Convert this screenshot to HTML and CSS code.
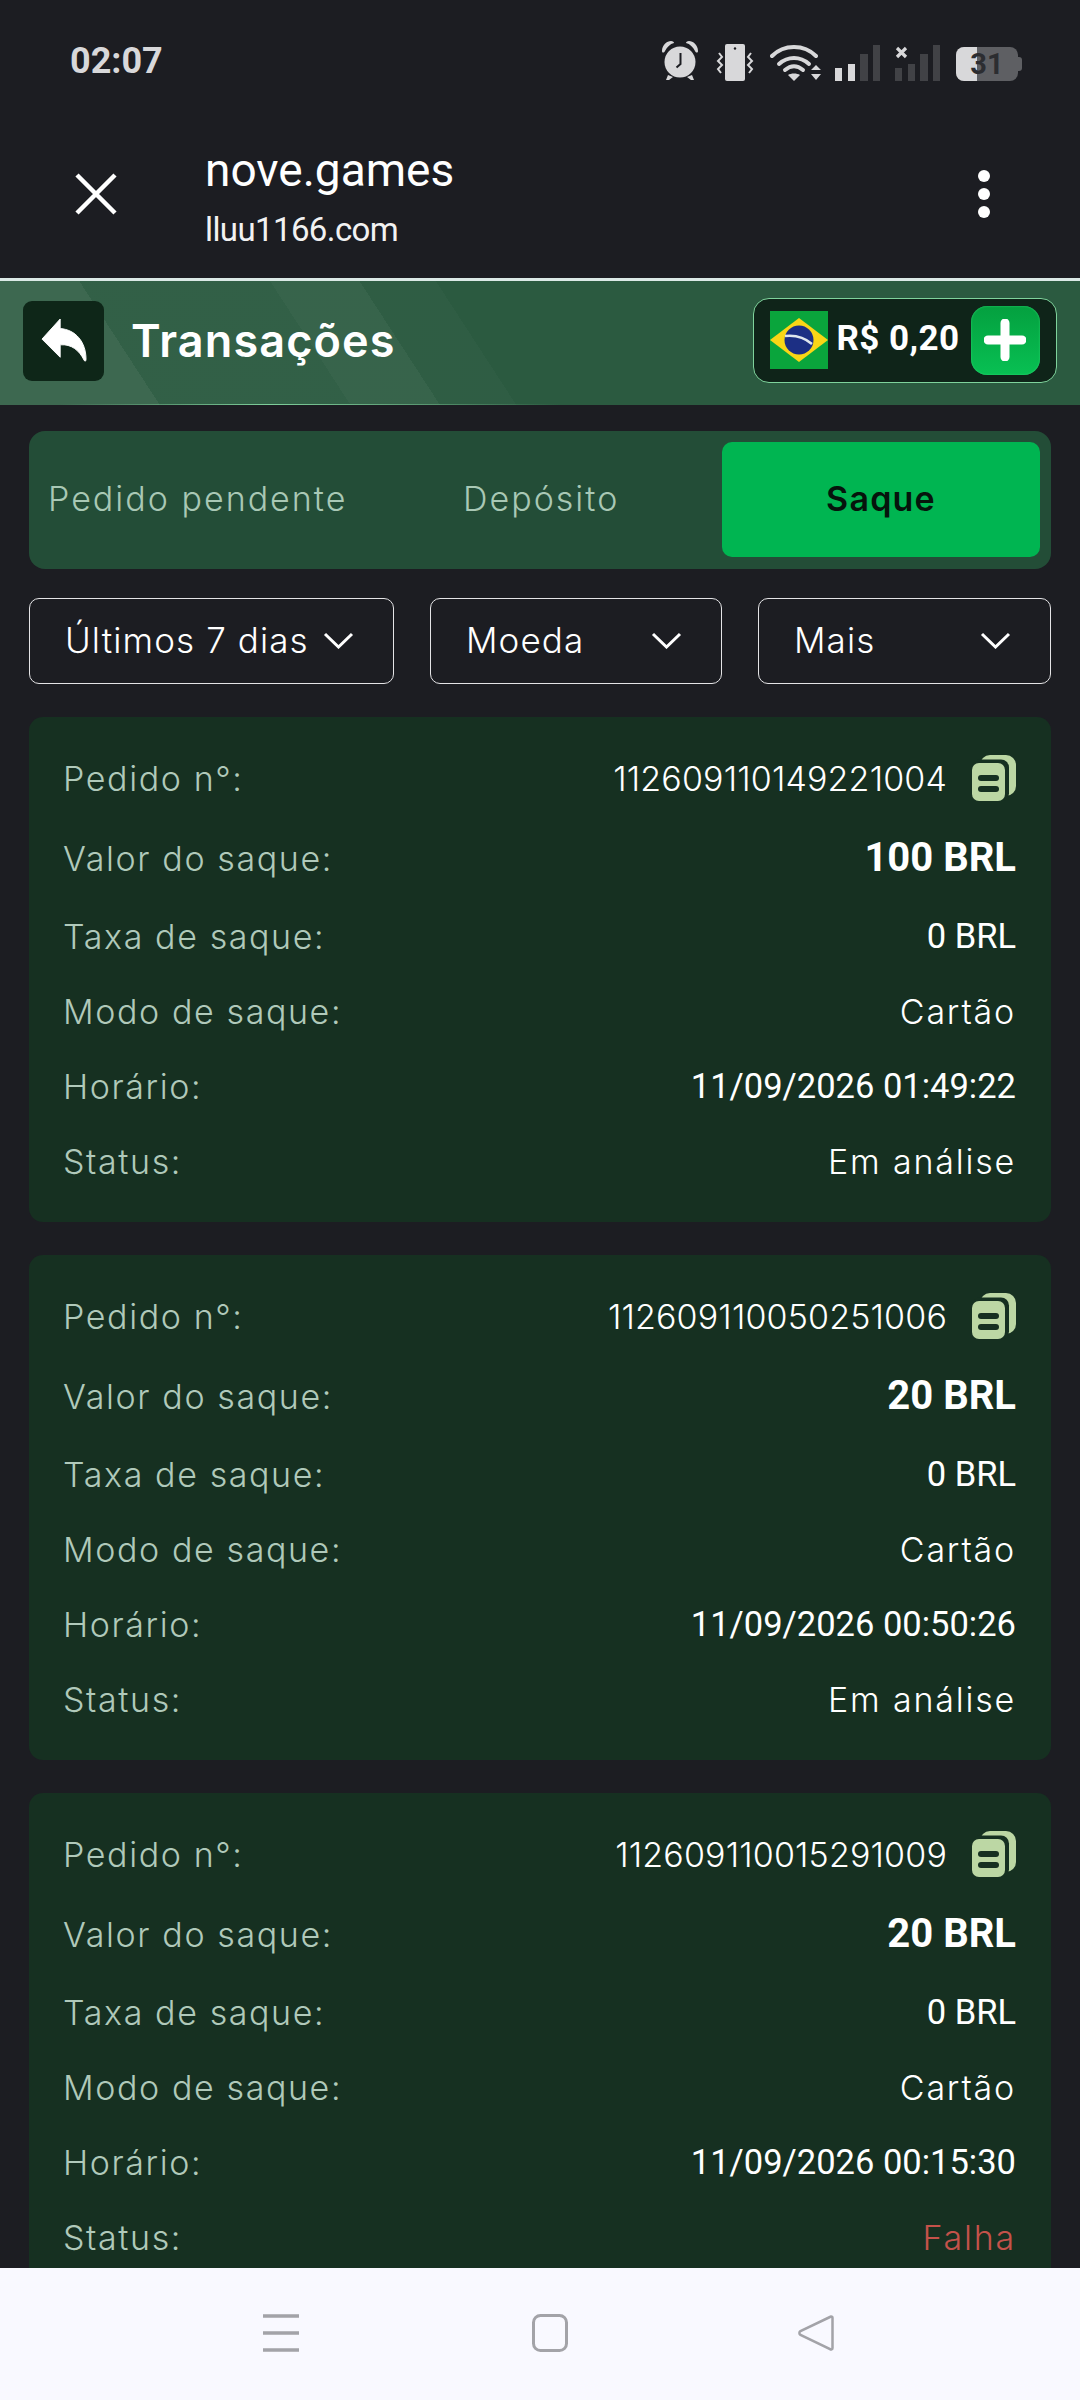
FILE: index.html
```html
<!DOCTYPE html>
<html lang="pt">
<head>
<meta charset="utf-8">
<title>Transações</title>
<link rel="stylesheet" href="styles.css">
</head>
<body>
<div class="screen">
  <div class="chrome">
    <div class="status">
      <span class="clock">02:07</span>
      <div class="status-icons">
        <svg class="i-alarm" viewBox="0 0 38 40"><circle cx="19" cy="21" r="15.500" fill="#d8d8da"/><path d="M1 10C1 4 6 0 10 0c2 0 3 1 3 2-4 1-7 4-9 8-1 2-3 2-3 0zM37 10C37 4 32 0 28 0c-2 0-3 1-3 2 4 1 7 4 9 8 1 2 3 2 3 0z" fill="#d8d8da"/><path d="M7 34l-2 5h3l4-3zM31 34l2 5h-3l-4-3z" fill="#d8d8da"/><path d="M19.500 12v11l-4 3.500" fill="none" stroke="#1c1d22" stroke-width="2"/></svg>
        <svg class="i-vib" viewBox="0 0 38 37"><rect x="9" y="0" width="20" height="37" rx="2" fill="#d8d8da"/><circle cx="19" cy="4.500" r="1.200" fill="#1c1d22"/><path d="M3 9l3 4-4 4 4 4-4 4 3 4M35 9l-3 4 4 4-4 4 4 4-3 4" fill="none" stroke="#d8d8da" stroke-width="2"/></svg>
        <svg class="i-wifi" viewBox="0 0 51 37"><path d="M2 12C14 0 34 0 46 12" fill="none" stroke="#d8d8da" stroke-width="4" stroke-linecap="round"/><path d="M9 20c9-8 21-8 30 0" fill="none" stroke="#d8d8da" stroke-width="4" stroke-linecap="round"/><path d="M15 26c6-5 12-5 18 0" fill="none" stroke="#d8d8da" stroke-width="4" stroke-linecap="round"/><path d="M18 31c3-2 9-2 12 0l-6 6z" fill="#d8d8da"/><path d="M41 26l5-5 5 5zM41 30h10l-5 6z" fill="#d8d8da"/></svg>
        <svg class="i-sig1" viewBox="0 0 45 36"><rect x="0" y="23" width="7" height="13" fill="#d8d8da"/><rect x="13" y="19" width="7" height="17" fill="#d8d8da"/><rect x="25" y="9" width="8" height="27" fill="#414246"/><rect x="38" y="0" width="7" height="36" fill="#414246"/></svg>
        <svg class="i-sig2" viewBox="0 0 45 36"><rect x="0" y="23" width="7" height="13" fill="#414246"/><rect x="13" y="19" width="7" height="17" fill="#414246"/><rect x="25" y="9" width="8" height="27" fill="#414246"/><rect x="38" y="0" width="7" height="36" fill="#414246"/><path d="M2 3l9 9M11 3l-9 9" stroke="#d8d8da" stroke-width="3.200"/></svg>
        <div class="battery"><div class="batt-body"><span class="batt-fill"></span><span class="batt-num">31</span></div><span class="batt-nub"></span></div>
      </div>
    </div>
    <div class="tabbar">
      <svg class="i-close" viewBox="0 0 42 42"><path d="M2 2l38 38M40 2L2 40" stroke="#fff" stroke-width="4.500"/></svg>
      <div class="site">
        <div class="site-title">nove.games</div>
        <div class="site-url">lluu1166.com</div>
      </div>
      <div class="kebab"><i></i><i></i><i></i></div>
    </div>
  </div>
  <div class="rule"></div>
  <header class="head">
    <button class="back">
      <svg viewBox="0 0 46 46"><path d="M19 0L0 21l19 19V27c12-1 20 6 25 16 1 2 2 1 2-1C46 24 35 11 19 10z" fill="#fff" stroke="#fff" stroke-width="1" stroke-linejoin="round"/></svg>
    </button>
    <h1 class="title">Transações</h1>
    <div class="wallet">
      <svg class="flag" viewBox="0 0 58 58"><rect width="58" height="58" fill="#0aa53c"/><path d="M29 7l29 22-29 22L0 29z" fill="#f9d616"/><circle cx="29" cy="29" r="14.500" fill="#1c2f84"/><path d="M15 25c9-1 19 1 27 8" stroke="#dfe6ee" stroke-width="2.500" fill="none"/></svg>
      <span class="amount">R$ 0,20</span>
      <span class="plus"><svg viewBox="0 0 42 42"><path d="M21 4v34M4 21h34" stroke="#fff" stroke-width="9" stroke-linecap="round"/></svg></span>
    </div>
  </header>
  <main class="content">
    <nav class="tabs">
      <span class="tab tab-pend">Pedido pendente</span>
      <span class="tab tab-dep">Depósito</span>
      <span class="tab tab-on">Saque</span>
    </nav>
    <div class="filters">
      <div class="sel sel-a"><span>Últimos 7 dias</span><svg viewBox="0 0 31 17"><path d="M2 2l13.500 13L29 2" fill="none" stroke="#fff" stroke-width="3"/></svg></div>
      <div class="sel sel-b"><span>Moeda</span><svg viewBox="0 0 31 17"><path d="M2 2l13.500 13L29 2" fill="none" stroke="#fff" stroke-width="3"/></svg></div>
      <div class="sel sel-c"><span>Mais</span><svg viewBox="0 0 31 17"><path d="M2 2l13.500 13L29 2" fill="none" stroke="#fff" stroke-width="3"/></svg></div>
    </div>

    <section class="card">
      <div class="row"><span class="k">Pedido n°:</span><span class="v num">112609110149221004<svg class="copy" viewBox="0 0 44 46"><rect x="8" y="0" width="36" height="41" rx="10" fill="#bcd7a4"/><rect x="0" y="4.500" width="37" height="42" rx="8" fill="#163021"/><rect x="0" y="8" width="33" height="38" rx="7" fill="#bcd7a4"/><rect x="6" y="20" width="21" height="6" rx="3" fill="#163021"/><rect x="6" y="31" width="21" height="6" rx="3" fill="#163021"/></svg></span></div>
      <div class="row r2"><span class="k">Valor do saque:</span><span class="v big">100 BRL</span></div>
      <div class="row r3"><span class="k">Taxa de saque:</span><span class="v rb">0 BRL</span></div>
      <div class="row r4"><span class="k">Modo de saque:</span><span class="v">Cartão</span></div>
      <div class="row r5"><span class="k">Horário:</span><span class="v rb">11/09/2026 01:49:22</span></div>
      <div class="row r6"><span class="k">Status:</span><span class="v">Em análise</span></div>
    </section>

    <section class="card">
      <div class="row"><span class="k">Pedido n°:</span><span class="v num">112609110050251006<svg class="copy" viewBox="0 0 44 46"><rect x="8" y="0" width="36" height="41" rx="10" fill="#bcd7a4"/><rect x="0" y="4.500" width="37" height="42" rx="8" fill="#163021"/><rect x="0" y="8" width="33" height="38" rx="7" fill="#bcd7a4"/><rect x="6" y="20" width="21" height="6" rx="3" fill="#163021"/><rect x="6" y="31" width="21" height="6" rx="3" fill="#163021"/></svg></span></div>
      <div class="row r2"><span class="k">Valor do saque:</span><span class="v big">20 BRL</span></div>
      <div class="row r3"><span class="k">Taxa de saque:</span><span class="v rb">0 BRL</span></div>
      <div class="row r4"><span class="k">Modo de saque:</span><span class="v">Cartão</span></div>
      <div class="row r5"><span class="k">Horário:</span><span class="v rb">11/09/2026 00:50:26</span></div>
      <div class="row r6"><span class="k">Status:</span><span class="v">Em análise</span></div>
    </section>

    <section class="card">
      <div class="row"><span class="k">Pedido n°:</span><span class="v num">112609110015291009<svg class="copy" viewBox="0 0 44 46"><rect x="8" y="0" width="36" height="41" rx="10" fill="#bcd7a4"/><rect x="0" y="4.500" width="37" height="42" rx="8" fill="#163021"/><rect x="0" y="8" width="33" height="38" rx="7" fill="#bcd7a4"/><rect x="6" y="20" width="21" height="6" rx="3" fill="#163021"/><rect x="6" y="31" width="21" height="6" rx="3" fill="#163021"/></svg></span></div>
      <div class="row r2"><span class="k">Valor do saque:</span><span class="v big">20 BRL</span></div>
      <div class="row r3"><span class="k">Taxa de saque:</span><span class="v rb">0 BRL</span></div>
      <div class="row r4"><span class="k">Modo de saque:</span><span class="v">Cartão</span></div>
      <div class="row r5"><span class="k">Horário:</span><span class="v rb">11/09/2026 00:15:30</span></div>
      <div class="row r6"><span class="k">Status:</span><span class="v fail">Falha</span></div>
    </section>
  </main>
  <footer class="navbar">
    <svg class="nav-menu" viewBox="0 0 36 38"><path d="M0 2h36M0 19h36M0 36h36" stroke="#a3a3a8" stroke-width="3.500"/></svg>
    <svg class="nav-home" viewBox="0 0 36 38"><rect x="1.500" y="1.500" width="33" height="35" rx="7" fill="none" stroke="#a3a3a8" stroke-width="3"/></svg>
    <svg class="nav-back" viewBox="0 0 36 38"><path d="M33 2.500c1 0 1.500.5 1.500 1.500v30c0 1.500-1.500 2-2.500 1L2.500 21c-1.500-1-1.500-3 0-4L32 3z" fill="none" stroke="#a3a3a8" stroke-width="2.500"/></svg>
  </footer>
</div>
</body>
</html>
```
FILE: styles.css
```css
* { box-sizing: border-box; }
html, body { margin: 0; padding: 0; }
body { background: #1c1d22; font-family: "Inter", "Liberation Sans", sans-serif; color: #fff; }
.screen { width: 1080px; height: 2400px; display: flex; flex-direction: column; overflow: hidden; background: #1c1d22; }

.chrome { height: 278px; flex: none; }
.status { height: 122px; display: flex; align-items: center; justify-content: space-between; padding: 0 58px 0 70px; }
.clock { font: 700 36px/1 "Roboto", sans-serif; color: #d8d8da; }
.status-icons { display: flex; align-items: flex-end; height: 40px; }
.status-icons svg { display: block; flex: none; }
.i-alarm { width: 38px; height: 40px; }
.i-vib { width: 38px; height: 37px; margin-left: 17px; }
.i-wifi { width: 51px; height: 37px; margin-left: 16px; }
.i-sig1 { width: 45px; height: 36px; margin-left: 14px; }
.i-sig2 { width: 45px; height: 36px; margin-left: 15px; }
.battery { height: 34px; margin-left: 16px; display: flex; align-items: center; flex: none; }
.batt-body { width: 62px; height: 34px; border-radius: 8px; background: #5e5f63; position: relative; overflow: hidden; display: flex; align-items: center; justify-content: center; }
.batt-nub { width: 4px; height: 14px; background: #5e5f63; border-radius: 0 3px 3px 0; }
.batt-fill { position: absolute; left: 0; top: 0; bottom: 0; width: 21px; background: #d8d8da; }
.batt-num { position: relative; font: 700 29px/1 "Roboto", sans-serif; color: #2c2d31; }

.tabbar { height: 156px; display: flex; align-items: center; padding: 0 0 12px 75px; }
.i-close { width: 42px; height: 42px; flex: none; }
.site { margin-left: 88px; margin-top: 6px; flex: 1; }
.site-title { font: 400 46px/50px "Roboto", sans-serif; color: #fff; }
.site-url { font: 400 33px/38px "Roboto", sans-serif; color: #f2f2f2; margin-top: 16px; letter-spacing: -0.6px; }
.kebab { display: flex; flex-direction: column; gap: 6px; margin-right: 90px; }
.kebab i { width: 12px; height: 12px; border-radius: 50%; background: #fff; display: block; }

.rule { height: 3px; flex: none; background: #dbe9e6; }
.head { height: 124px; flex: none; display: flex; align-items: center; padding: 0 23.500px 0 23px;
  background:
    linear-gradient(90deg, transparent 60px, #7fcf9b 25%, transparent 52%) left bottom / 100% 1.500px no-repeat,
    linear-gradient(57deg, rgba(255,255,255,.085) 0 134px, rgba(255,255,255,.035) 134px 294px, rgba(255,255,255,.06) 294px 369px, rgba(255,255,255,.02) 369px 433px, transparent 433px),
    #2b5a40; }
.back { width: 81px; height: 80px; padding: 0; border: 0; border-radius: 9px; background: #0e2618; display: flex; align-items: center; justify-content: center; flex: none; margin-top: -4px; }
.back svg { width: 46px; height: 44px; }
.title { margin: 0 0 0 27px; font: 600 45px/1 "Inter", sans-serif; letter-spacing: 1.100px; color: #fff; flex: 1; position: relative; top: -3px; }
.wallet { width: 304px; height: 85px; margin-top: -6px; border: 1.500px solid #7fd39c; border-radius: 16px; background: #0f2419; display: flex; align-items: center; padding: 0 16px; flex: none; }
.flag { width: 58px; height: 58px; flex: none; }
.amount { font: 700 35px/1 "Roboto", sans-serif; margin-left: 9px; letter-spacing: .4px; flex: 1; white-space: nowrap; margin-top: -4px; }
.plus { width: 69px; height: 69px; border-radius: 16px; background: linear-gradient(180deg, #04a03f, #08c053); display: flex; align-items: center; justify-content: center; flex: none; box-shadow: inset 0 0 2px #33dd77; }
.plus svg { width: 42px; height: 42px; }

.content { flex: 1; min-height: 0; padding: 26px 29px 0; overflow: hidden; }
.tabs { height: 138px; border-radius: 16px; background: #234d37; display: flex; align-items: center; padding: 11px 11px 12px; }
.tab { font-size: 34px; font-weight: 300; letter-spacing: 2px; color: #a9c8b5; white-space: nowrap; padding-bottom: 3px; }
.tab-pend { margin-left: 8px; width: 415px; }
.tab-dep { width: 259px; }
.tab-on { width: 318px; height: 115px; border-radius: 10px; background: #00b551; color: #06140c; font-weight: 600; display: flex; align-items: center; justify-content: center; letter-spacing: 1.200px; }

.filters { display: flex; margin-top: 29px; gap: 36px; }
.sel { height: 86px; border: 1.500px solid #e4e4e6; border-radius: 10px; display: flex; align-items: center; justify-content: space-between; font-size: 35px; font-weight: 300; letter-spacing: 1.100px; color: #fff; padding: 0 39px 2px 35px; }
.sel svg { width: 31px; height: 17px; flex: none; }
.sel-a { width: 365px; }
.sel-b { width: 292px; }
.sel-c { width: 293px; }

.card { margin-top: 33px; height: 505px; background: #163021; border-radius: 14px; padding: 43px 35px 0; }
.row { height: 36px; display: flex; align-items: center; justify-content: space-between; }
.r2 { margin-top: 44px; }
.r3 { margin-top: 42px; }
.r4 { margin-top: 39px; }
.r5 { margin-top: 39px; }
.r6 { margin-top: 39px; }
.k { font-size: 34px; font-weight: 300; letter-spacing: 1.600px; color: #b0c9ba; white-space: nowrap; margin-left: -1px; }
.v { font-size: 34px; font-weight: 300; letter-spacing: 1.800px; color: #fff; white-space: nowrap; }
.num { display: flex; align-items: center; letter-spacing: .15px; }
.big { font: 700 40px/1 "Roboto", sans-serif; letter-spacing: 0; }
.rb { font: 400 34.500px/1 "Roboto", sans-serif; letter-spacing: 0; }
.fail { color: #c4524a; }
.copy { width: 44px; height: 46px; margin-left: 25px; flex: none; }

.navbar { height: 132px; flex: none; background: #f9f9ff; display: flex; align-items: center; padding: 0 0 2px 263px; }
.navbar svg { width: 36px; height: 38px; flex: none; }
.nav-home { margin-left: 233px; }
.nav-back { margin-left: 230px; }
```
